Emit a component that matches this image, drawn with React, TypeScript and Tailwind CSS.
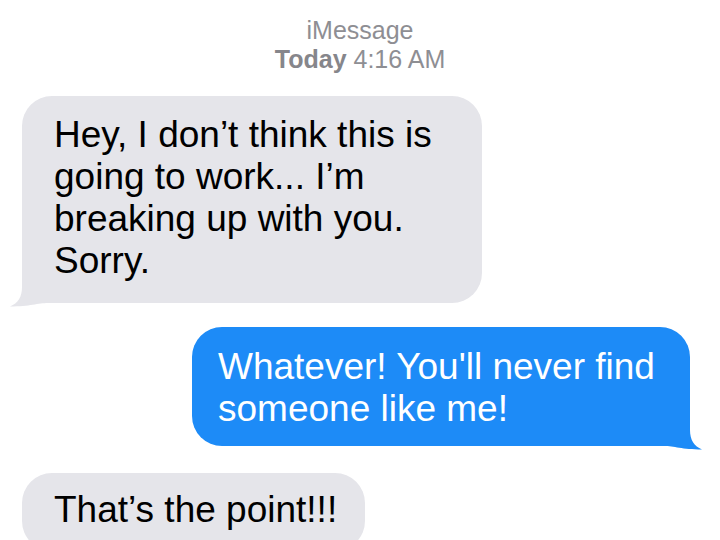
function Tail({ color, flip }: { color: string; flip?: boolean }) {
  return (
    <svg
      width="50"
      height="36"
      viewBox="0 0 50 36"
      className={flip ? "absolute -right-[12px] -bottom-[4px] -scale-x-100" : "absolute -left-[12px] -bottom-[4px]"}
    >
      <path d="M12 0 L50 0 L50 32 L38 32 C28 32 20 35.5 0 35.5 C8 32 12 26 12 16 Z" fill={color} />
    </svg>
  );
}

export default function App() {
  return (
    <div className="h-[540px] w-[720px] overflow-hidden bg-white font-['Liberation_Sans',Arial,sans-serif]">
      <header className="pt-[16px] text-center text-[25px] leading-[29px] text-[#8e8e93]">
        <p>iMessage</p>
        <p>
          <span className="font-semibold text-[#86868b]">Today</span> 4:16 AM
        </p>
      </header>

      <div className="mt-[22px] flex pl-[22px]">
        <div className="relative w-[460px] rounded-[30px] bg-[#e5e5ea] pb-[21px] pl-[32px] pr-[26px] pt-[18px] text-[37px] leading-[42px] text-black">
          <Tail color="#e5e5ea" />
          <p className="relative">Hey, I don’t think this is going to work... I’m breaking up with you. Sorry.</p>
        </div>
      </div>

      <div className="mt-[24px] flex justify-end pr-[30px]">
        <div className="relative w-[498px] rounded-[30px] bg-[#1d8bf7] pb-[16px] pl-[26px] pr-[33px] pt-[19px] text-[37px] leading-[42px] text-white">
          <Tail color="#1d8bf7" flip />
          <p className="relative">Whatever! You'll never find someone like me!</p>
        </div>
      </div>

      <div className="mt-[27px] flex pl-[22px]">
        <div className="relative rounded-[30px] bg-[#e5e5ea] pb-[20px] pl-[32px] pr-[28px] pt-[16px] text-[37px] leading-[42px] text-black">
          <p>That’s the point!!!</p>
        </div>
      </div>
    </div>
  );
}
